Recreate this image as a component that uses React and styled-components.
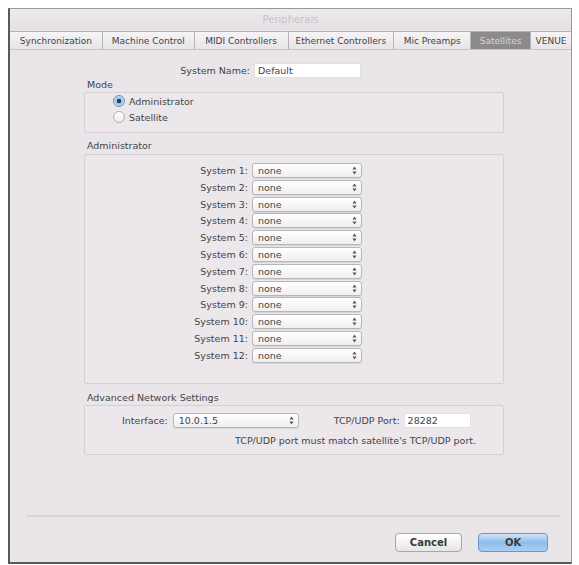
import React from "react";
import styled, { createGlobalStyle } from "styled-components";

const GlobalStyle = createGlobalStyle`
  html, body {
    margin: 0;
    padding: 0;
    background: #ffffff;
  }
  body {
    font-family: "DejaVu Sans", "Liberation Sans", sans-serif;
    font-size: 10px;
    color: #464446;
  }
`;

const Window = styled.div`
  box-sizing: border-box;
  margin: 8px 0 0 8px;
  width: 564px;
  height: 556px;
  background: #e9e5e9;
  border: 1px solid #9a989a;
  border-left: 2px solid #5a585a;
  border-bottom: 2px solid #5a585a;
  display: flex;
  flex-direction: column;
`;

const TitleBar = styled.div`
  height: 21px;
  display: flex;
  align-items: center;
  justify-content: center;
  color: #c6c2c6;
  font-size: 10px;
  background: linear-gradient(#eeeaee, #e4e0e4);
`;

const TabBar = styled.div`
  display: flex;
  height: 17px;
  margin: 1px 0 0 0;
  border-top: 1px solid #b6b4b6;
  border-bottom: 1px solid #c6c4c6;
  background: linear-gradient(#f6f4f6, #e6e4e6);
`;

const Tab = styled.div`
  box-sizing: border-box;
  width: ${(p) => p.$w}px;
  display: flex;
  align-items: center;
  justify-content: center;
  border-right: 1px solid #b4b2b4;
  font-size: 9px;
  color: ${(p) => (p.$active ? "#d6d4d6" : "#444244")};
  background: ${(p) => (p.$active ? "#8c8a8c" : "transparent")};
  &:last-child {
    border-right: none;
  }
`;

const Content = styled.div`
  padding: 13px 0 0 74px;
  width: 420px;
  display: flex;
  flex-direction: column;
`;

const FieldRow = styled.div`
  display: grid;
  grid-template-columns: ${(p) => p.$label}px ${(p) => p.$field}px;
  column-gap: 4px;
  align-items: center;
`;

const Label = styled.span`
  text-align: right;
  font-size: 9.5px;
  white-space: nowrap;
`;

const TextInput = styled.div`
  box-sizing: border-box;
  height: 15px;
  background: #ffffff;
  border: 1px solid #e2e0e2;
  padding: 0 3px;
  display: flex;
  align-items: center;
  font-size: 9.5px;
`;

const GroupTitle = styled.div`
  margin: ${(p) => p.$top}px 0 0 3px;
  height: 12px;
  line-height: 12px;
  font-size: 9.5px;
`;

const GroupBox = styled.div`
  box-sizing: border-box;
  margin-top: ${(p) => p.$top}px;
  width: 420px;
  height: ${(p) => p.$h}px;
  padding: ${(p) => p.$pad};
  border: 1px solid #d4d0d4;
  border-radius: 2px;
  background: #ebe7eb;
  display: flex;
  flex-direction: column;
`;

const RadioRow = styled.div`
  display: flex;
  align-items: center;
  gap: 4px;
  height: 16px;
  font-size: 9.5px;
`;

const RadioDot = styled.span`
  box-sizing: border-box;
  width: 12px;
  height: 12px;
  border-radius: 50%;
  border: 1px solid ${(p) => (p.$on ? "#6f8fb8" : "#b0aeb0")};
  background: ${(p) =>
    p.$on
      ? "radial-gradient(circle, #1f3f78 0 2px, #9dbbe0 2.5px, #dce8f6 6px)"
      : "linear-gradient(#ffffff, #ecebec)"};
`;

const SystemList = styled.div`
  display: flex;
  flex-direction: column;
  gap: 1.8px;
`;

const Select = styled.div`
  box-sizing: border-box;
  width: ${(p) => (p.$w ? `${p.$w}px` : "auto")};
  height: 15px;
  border: 1px solid #b8b6b8;
  border-radius: 3px;
  background: linear-gradient(#ffffff, #f0eff0);
  box-shadow: 0 1px 0 rgba(0, 0, 0, 0.08);
  padding: 0 4px 0 5px;
  display: flex;
  align-items: center;
  justify-content: space-between;
  font-size: 9.5px;
`;

const NetRow = styled.div`
  display: flex;
  align-items: center;
`;

const PortInput = styled(TextInput)`
  width: 67px;
  margin-left: 4px;
`;

const Note = styled.div`
  margin: 7px 0 0 113px;
  font-size: 9.5px;
  white-space: nowrap;
`;

const Footer = styled.div`
  margin: auto 11px 0 17px;
  border-top: 2px solid #d8d4d8;
  height: 47px;
  box-sizing: border-box;
  padding: 16px 12px 0 0;
  display: flex;
  align-items: flex-start;
  justify-content: flex-end;
  gap: 16px;
`;

const Button = styled.div`
  box-sizing: border-box;
  width: ${(p) => p.$w}px;
  height: 19px;
  border-radius: 4px;
  display: flex;
  align-items: center;
  justify-content: center;
  font-size: 10px;
  font-weight: bold;
  color: #3a383a;
  border: 1px solid ${(p) => (p.$primary ? "#6f94c4" : "#a8a6a8")};
  background: ${(p) =>
    p.$primary
      ? "linear-gradient(#cfe4fa, #8fbcea 50%, #a9d0f4)"
      : "linear-gradient(#ffffff, #f2f2f2 50%, #e6e6e6)"};
`;

const tabs = [
  ["Synchronization", 93],
  ["Machine Control", 92],
  ["MIDI Controllers", 94],
  ["Ethernet Controllers", 106],
  ["Mic Preamps", 77],
  ["Satellites", 60],
  ["VENUE", 40],
];

function Arrows() {
  return (
    <svg width="5" height="9" viewBox="0 0 5 9">
      <path d="M2.5 0.5 L4.5 3.5 L0.5 3.5 Z" fill="#555355" />
      <path d="M2.5 8.5 L4.5 5.5 L0.5 5.5 Z" fill="#555355" />
    </svg>
  );
}

function Dropdown({ value, width }) {
  return (
    <Select $w={width}>
      <span>{value}</span>
      <Arrows />
    </Select>
  );
}

export default function App() {
  const systems = Array.from({ length: 12 }, (_, i) => i + 1);

  return (
    <>
      <GlobalStyle />
      <Window>
        <TitleBar>Peripherals</TitleBar>
        <TabBar>
          {tabs.map(([name, w]) => (
            <Tab key={name} $w={w} $active={name === "Satellites"}>
              {name}
            </Tab>
          ))}
        </TabBar>

        <Content>
          <FieldRow $label={166} $field={107}>
            <Label>System Name:</Label>
            <TextInput>Default</TextInput>
          </FieldRow>

          <GroupTitle $top={1}>Mode</GroupTitle>
          <GroupBox $top={1} $h={41} $pad="0 0 0 28px">
            <RadioRow>
              <RadioDot $on />
              Administrator
            </RadioRow>
            <RadioRow>
              <RadioDot />
              Satellite
            </RadioRow>
          </GroupBox>

          <GroupTitle $top={7}>Administrator</GroupTitle>
          <GroupBox $top={2} $h={230} $pad="8px 0 0 0">
            <SystemList>
              {systems.map((n) => (
                <FieldRow key={n} $label={163} $field={110}>
                  <Label>System {n}:</Label>
                  <Dropdown value="none" />
                </FieldRow>
              ))}
            </SystemList>
          </GroupBox>

          <GroupTitle $top={8}>Advanced Network Settings</GroupTitle>
          <GroupBox $top={1} $h={50} $pad="7px 0 0 37px">
            <NetRow>
              <Label>Interface:</Label>
              <span style={{ width: 5 }} />
              <Dropdown value="10.0.1.5" width={126} />
              <span style={{ width: 35 }} />
              <Label>TCP/UDP Port:</Label>
              <PortInput>28282</PortInput>
            </NetRow>
            <Note>TCP/UDP port must match satellite's TCP/UDP port.</Note>
          </GroupBox>
        </Content>

        <Footer>
          <Button $w={67}>Cancel</Button>
          <Button $w={70} $primary>
            OK
          </Button>
        </Footer>
      </Window>
    </>
  );
}
